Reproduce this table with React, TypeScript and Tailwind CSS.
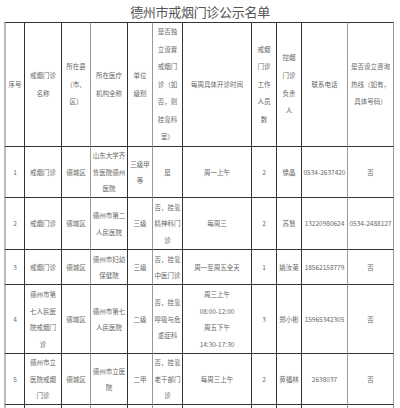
// right border colour per column
const rb = [
  "border-r-[#333]",
  "border-r-[#333]",
  "border-r-[#999]",
  "border-r-[#333]",
  "border-r-[#999]",
  "border-r-[#333]",
  "border-r-[#333]",
  "border-r-[#333]",
  "border-r-[#333]",
  "border-r-[#999]",
  "border-r-[#999]",
];

const header = [
  ["序号"],
  ["戒烟门诊", "名称"],
  ["所在县", "（市、", "区）"],
  ["所在医疗", "机构全称"],
  ["单位", "级别"],
  ["是否独", "立设置", "戒烟门", "诊（如", "否，则", "挂靠科", "室）"],
  ["每周具体开诊时间"],
  ["戒烟", "门诊", "工作", "人员", "数"],
  ["控烟", "门诊", "负责", "人"],
  ["联系电话"],
  ["是否设立咨询", "热线（如有，", "具体号码）"],
];

const rows: string[][][] = [
  [["1"], ["戒烟门诊"], ["德城区"], ["山东大学齐", "鲁医院德州", "医院"], ["三级甲", "等"], ["是"], ["周一上午"], ["2"], ["徐晶"], ["0534-2637420"], ["否"]],
  [["2"], ["戒烟门诊"], ["德城区"], ["德州市第二", "人民医院"], ["三级"], ["否，挂靠", "精神科门", "诊"], ["每周三"], ["2"], ["苏慧"], ["13220980624"], ["0534-2488127"]],
  [["3"], ["戒烟门诊"], ["德城区"], ["德州市妇幼", "保健院"], ["三级"], ["否，挂靠", "中医门诊"], ["周一至周五全天"], ["1"], ["姚汝菊"], ["18562158779"], ["否"]],
  [["4"], ["德州市第", "七人民医", "院戒烟门", "诊"], ["德城区"], ["德州市第七", "人民医院"], ["二级"], ["否，挂靠", "呼吸与危", "重症科"], ["周三上午", "08:00-12:00", "周五下午", "14:30-17:30"], ["3"], ["郑小彬"], ["15965342305"], ["否"]],
  [["5"], ["德州市立", "医院戒烟", "门诊"], ["德城区"], ["德州市立医", "院"], ["二甲"], ["否，挂靠", "老干部门", "诊"], ["每周三上午"], ["2"], ["黄福林"], ["2638037"], ["否"]],
  [[""], [""], [""], [""], [""], [""], [""], [""], [""], [""], [""]],
];

function Cell({ lines, col, head }: { lines: string[]; col: number; head?: boolean }) {
  return (
    <div
      className={`flex flex-col items-center justify-center text-center border-b border-b-[#333] border-r ${rb[col]} ${
        col === 0 ? "border-l-2 border-l-[#bbb]" : ""
      } ${head ? "border-t border-t-[#333] leading-[17.6px]" : "leading-[16.5px]"}`}
    >
      {lines.map((l, i) => (
        <div key={i} className="whitespace-nowrap">
          {l}
        </div>
      ))}
    </div>
  );
}

export default function App() {
  return (
    <div
      className="w-[400px] h-[408px] overflow-hidden bg-white text-[#666]"
      style={{ fontFamily: '"Noto Sans CJK SC", "Noto Sans", sans-serif' }}
    >
      <div className="h-[22px] flex items-center justify-center pt-[2px] text-[13px] text-[#555] tracking-[-0.3px]">
        德州市戒烟门诊公示名单
      </div>
      <div className="ml-[4px] grid grid-cols-[21px_37px_29px_37px_25px_30px_69px_25px_25px_46px_46px] grid-rows-[125px_51px_52px_35px_69px_51px_40px] text-[6.5px]">
        {header.map((c, i) => (
          <Cell key={"h" + i} lines={c} col={i} head />
        ))}
        {rows.map((r, ri) =>
          r.map((c, i) => <Cell key={ri + "-" + i} lines={c} col={i} />)
        )}
      </div>
    </div>
  );
}
